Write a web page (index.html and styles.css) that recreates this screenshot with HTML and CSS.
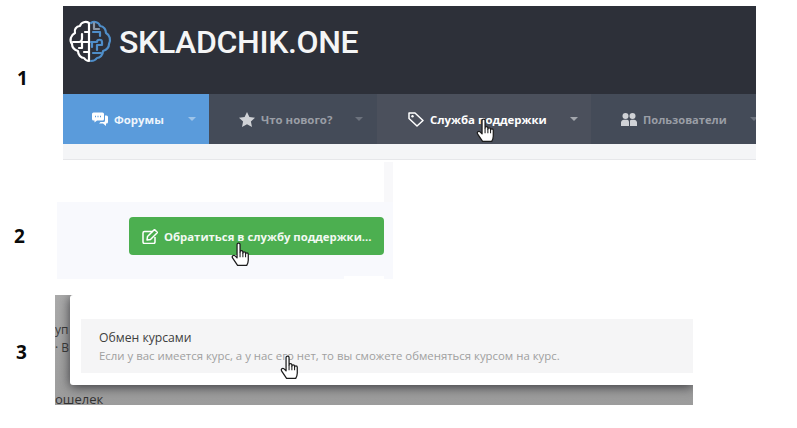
FILE: index.html
```html
<!DOCTYPE html>
<html lang="ru">
<head>
<meta charset="utf-8">
<title>Skladchik.one</title>
<link rel="stylesheet" href="styles.css">
</head>
<body>
<svg class="defs" width="0" height="0" aria-hidden="true">
  <symbol id="hand" viewBox="0 0 20 26">
    <path d="M6.2 2.4c0-1.9 2.9-1.9 2.9 0v7.2c0-1.6 2.7-1.6 2.7 0v1c0-1.6 2.6-1.6 2.6 0v1c0-1.5 2.6-1.5 2.6 .2v5.7c0 2.1-.6 3.300-1.500 5H6.700L2 15.500c-1.300-1.700.8-3.500 2.300-2.100l1.900 1.900z" fill="#fff" stroke="#1c1c1c" stroke-width="1.200" stroke-linejoin="round"/>
    <path d="M9.100 9.600v5.200M11.800 10.600v4.200M14.400 11.600v3.200" fill="none" stroke="#1c1c1c" stroke-width="1"/>
  </symbol>
</svg>

<main class="sheet">
  <section class="row row-one">
    <div class="step step-one">1</div>
    <div class="shot shot-one">
      <header class="brand">
        <svg class="brain" viewBox="0 0 44 44" aria-hidden="true">
          <g fill="none" stroke-width="2.200" stroke-linecap="round" stroke-linejoin="round">
            <path stroke="#fff" d="M21 3c-3-2-8-1-9 3-4 0-6 4-5 7-4 2-6 7-3 11 0 4 3 6 6 7 0 4 3 7 6 7 2 3 4 3 5 3V3z"/>
            <path stroke="#fff" d="M5 22h6c2 0 3-2 3-4v-4M21 12h-4M21 22h-7v6h-3M21 32h-5"/>
            <path stroke="#4f8ec9" d="M23 3c3-2 8-1 9 3 4 0 6 4 6 7 4 2 5 7 3 11 0 4-3 6-6 7 0 4-3 7-6 7-2 3-4 3-6 3"/>
            <path stroke="#4f8ec9" d="M23 22h6c0-3 5-3 5 0v3h-5v5M25 12h7v4M25 33h8M24 27v-5"/>
            <path stroke="#8a97a6" d="M26 3v6h5"/>
          </g>
        </svg>
        <span class="brand-name">SKLADCHIK.ONE</span>
      </header>
      <nav class="nav">
        <div class="nav-item nav-forums">
          <svg class="nav-icon" viewBox="0 0 16 14" aria-hidden="true"><path d="M1.500 0h9A1.500 1.500 0 0 1 12 1.500v5A1.500 1.500 0 0 1 10.500 8H5L2.500 10V8h-1A1.500 1.500 0 0 1 0 6.500v-5A1.500 1.500 0 0 1 1.500 0z" fill="#fff"/><path d="M13 3h1.500A1.500 1.500 0 0 1 16 4.500v5a1.500 1.500 0 0 1-1.500 1.500H14v2.500L11 11H7l1.500-1.500h3A1.500 1.500 0 0 0 13 8z" fill="#fff"/><path d="M3 4h1M5.500 4h1M8 4h1" stroke="#5b9bd9" stroke-width="1.400"/></svg>
          <span class="nav-label">Форумы</span>
          <span class="caret"></span>
        </div>
        <div class="nav-item nav-new">
          <svg class="nav-icon" viewBox="0 0 16 15" aria-hidden="true"><path d="M8 0l2.400 5 5.600.7-4.100 3.800 1.100 5.500L8 12.300 3 15l1.100-5.500L0 5.700 5.600 5z" fill="#d0d2d6"/></svg>
          <span class="nav-label">Что нового?</span>
          <span class="caret"></span>
        </div>
        <div class="nav-item nav-support">
          <svg class="nav-icon" viewBox="0 0 16 15" aria-hidden="true"><path d="M1 1h6l8 7.500-6 5.500-8-7.500z" fill="none" stroke="#fff" stroke-width="1.500" stroke-linejoin="round"/><circle cx="4.500" cy="4.300" r="1.200" fill="#fff"/></svg>
          <span class="nav-label">Служба поддержки</span>
          <span class="caret"></span>
          <svg class="hand hand-nav" aria-hidden="true"><use href="#hand"/></svg>
        </div>
        <div class="nav-item nav-users">
          <svg class="nav-icon" viewBox="0 0 16 13" aria-hidden="true"><circle cx="4.500" cy="3" r="3" fill="#d0d2d6"/><circle cx="11.500" cy="3" r="3" fill="#d0d2d6"/><path d="M0 13V9.500C0 8 1.500 6.800 3 6.800h3C7.500 6.800 8 8 8 9.500V13zM9 13V7.500c.5-.5 1-.7 2-.7h2c1.500 0 3 1.200 3 2.700V13z" fill="#d0d2d6"/></svg>
          <span class="nav-label">Пользователи</span>
          <span class="caret"></span>
        </div>
      </nav>
      <div class="subnav"></div>
    </div>
  </section>

  <section class="row row-two">
    <div class="step step-two">2</div>
    <div class="shot shot-two">
      <div class="panel-blank"></div>
      <div class="panel-foot">
        <button class="support-btn" type="button">
          <svg class="btn-icon" viewBox="0 0 16 15" aria-hidden="true"><path d="M11 2.500H2.500A1.500 1.500 0 0 0 1 4v9a1.500 1.500 0 0 0 1.500 1.500h9A1.500 1.500 0 0 0 13 13V8" fill="none" stroke="#fff" stroke-width="1.500"/><path d="M5.500 7.500l7-7 3 3-7 7-3.500.5z" fill="none" stroke="#fff" stroke-width="1.500" stroke-linejoin="round"/></svg>
          <span>Обратиться в службу поддержки...</span>
          <svg class="hand hand-btn" aria-hidden="true"><use href="#hand"/></svg>
        </button>
        <div class="panel-tab"></div>
      </div>
    </div>
  </section>

  <section class="row row-three">
    <div class="step step-three">3</div>
    <div class="shot shot-three">
      <div class="backdrop-text">
        <span>уп</span>
        <span>· В</span>
        <span class="purse">ошелек</span>
      </div>
      <div class="modal">
        <div class="option">
          <div class="option-title">Обмен курсами</div>
          <div class="option-desc">Если у вас имеется курс, а у нас его нет, то вы сможете обменяться курсом на курс.</div>
          <svg class="hand hand-option" aria-hidden="true"><use href="#hand"/></svg>
        </div>
      </div>
    </div>
  </section>
</main>
</body>
</html>
```

FILE: styles.css
```css
* { box-sizing: border-box; }

html, body { margin: 0; padding: 0; background: #fff; }

body {
  width: 797px;
  height: 428px;
  overflow: hidden;
  font-family: "Open Sans", "Noto Sans", sans-serif;
}

.defs { display: block; height: 0; }

.sheet { display: flex; flex-direction: column; padding-top: 6px; }

.row { display: flex; align-items: flex-start; }
.row-two { margin-top: 2px; }
.row-three { margin-top: 16px; }

.step {
  flex: none;
  font-family: "Open Sans", "Noto Sans", sans-serif;
  font-weight: 700;
  font-size: 19px;
  line-height: 24px;
  color: #0a0a0a;
}
.step-one { width: 63px; padding: 60px 0 0 17px; }
.step-two { width: 57px; padding: 62px 0 0 14px; }
.step-three { width: 55px; padding: 45px 0 0 16px; }

.shot { flex: none; }

/* 1: forum header */
.shot-one { width: 693px; height: 154px; display: flex; flex-direction: column; }

.brand {
  height: 88px;
  background: #2d3039;
  display: flex;
  align-items: flex-start;
  padding: 14px 0 0 5px;
  gap: 7px;
}
.brain { width: 44px; height: 44px; flex: none; }
.brand-name {
  font-family: "Roboto", "Liberation Sans", sans-serif;
  font-size: 32px;
  font-weight: 500;
  line-height: 44px;
  letter-spacing: -.35px;
  color: #f4f5f6;
  white-space: nowrap;
}

.nav { height: 50px; display: flex; overflow: hidden; }
.nav-item {
  position: relative;
  flex: none;
  display: flex;
  align-items: center;
  font-size: 11.400px;
  font-weight: 700;
  background: #444b58;
  color: #9a9ea6;
}
.nav-icon { flex: none; height: 15px; width: 16px; }
.nav-label { white-space: nowrap; }
.caret {
  flex: none;
  margin-left: auto;
  width: 0;
  height: 0;
  border-left: 4.500px solid transparent;
  border-right: 4.500px solid transparent;
  border-top: 4.500px solid #6c727d;
}

.nav-forums { width: 146px; padding: 0 13px 0 29px; background: #5a9bdb; color: #eef5fc; }
.nav-forums .nav-label { margin-left: 6px; }
.nav-forums .caret { border-top-color: #9dc4e9; }

.nav-new { width: 168px; padding: 0 14px 0 30px; }
.nav-new .nav-label { margin-left: 6px; }

.nav-support { width: 214px; padding: 0 13px 0 31px; background: #4b505c; color: #fff; }
.nav-support .nav-label { margin-left: 6px; }
.nav-support .caret { border-top-color: #a4a7ad; }

.nav-users { width: 165px; padding: 0 0 0 30px; font-size: 11.100px; }
.nav-users .nav-label { margin-left: 6px; }
.nav-users .caret { margin-right: -2px; }

.subnav { height: 16px; background: #f4f5f7; border-bottom: 1px solid #e6e7ea; }

.hand { position: absolute; width: 22px; height: 27px; }
.hand-nav { left: 98px; top: 24px; }
.hand-btn { left: 101px; top: 25px; }
.hand-option { left: 198px; top: 36px; }

/* 2: support button */
.shot-two { width: 336px; height: 117px; display: flex; flex-direction: column; }
.panel-blank { height: 40px; background: #fff; border-right: 9px solid #f8f8fa; }
.panel-foot {
  flex: 1;
  display: flex;
  flex-direction: column;
  background: #f8f9fd;
  padding: 15px 9px 0 72px;
}

.support-btn {
  position: relative;
  flex: none;
  width: 255px;
  height: 38px;
  padding: 0 0 0 13px;
  display: flex;
  align-items: center;
  gap: 6px;
  border: 0;
  border-radius: 4px;
  background: #4caf50;
  color: #f2f9f2;
  font-family: "Open Sans", "Noto Sans", sans-serif;
  font-size: 11.350px;
  font-weight: 700;
  white-space: nowrap;
}
.btn-icon { flex: none; width: 16px; height: 15px; }
.panel-tab { align-self: flex-end; width: 40px; height: 3px; margin-top: 21px; background: #fff; }

/* 3: modal option */
.shot-three {
  position: relative;
  width: 638px;
  height: 110px;
  padding-left: 15px;
  background: linear-gradient(#aaaaaa, #9c9c9c);
  overflow: hidden;
}
.backdrop-text {
  position: absolute;
  left: 0;
  top: 26px;
  display: flex;
  flex-direction: column;
  font-size: 12px;
  line-height: 18px;
  color: #3a3a3a;
}
.backdrop-text .purse { margin-top: 36px; font-size: 13px; line-height: 12px; color: #333; }

.modal {
  position: relative;
  height: 90px;
  background: #fff;
  padding: 24px 0 0 11px;
  border-radius: 3px 0 0 3px;
  box-shadow: 0 2px 12px rgba(30, 30, 35, .8);
}
.option {
  position: relative;
  height: 54px;
  padding: 11px 0 0 18px;
  background: #f5f5f6;
}
.option-title { font-size: 12.200px; line-height: 16px; color: #3e3e3e; }
.option-desc { margin-top: 2px; font-size: 11.400px; line-height: 16px; color: #a0a0a0; white-space: nowrap; }
```
